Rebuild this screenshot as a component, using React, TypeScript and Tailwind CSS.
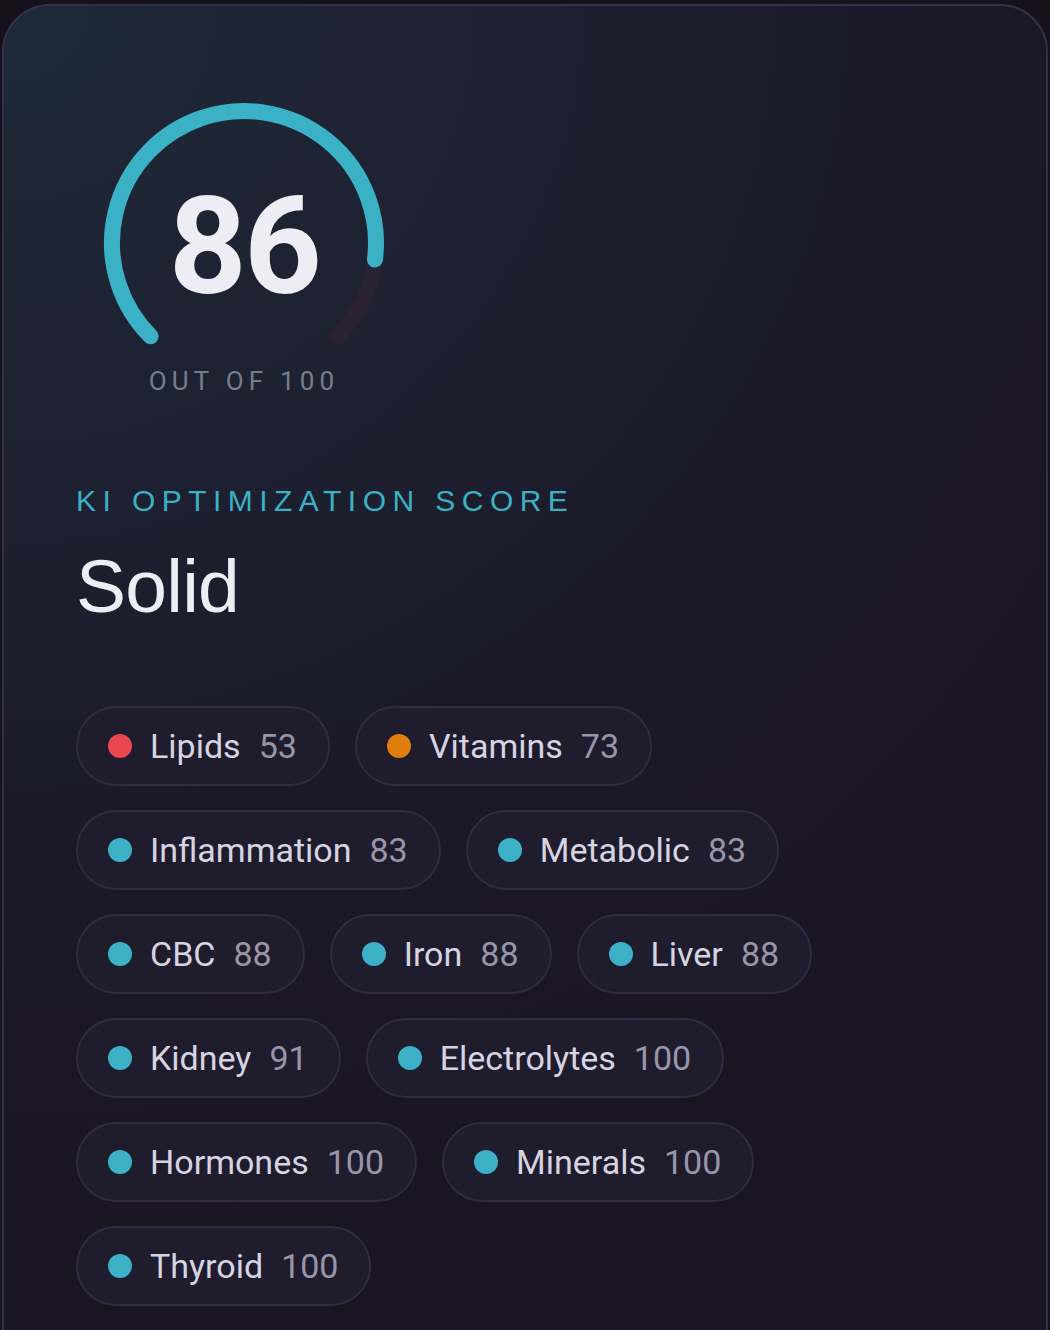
import React from "react";

type Chip = { label: string; value: number; color: string };

const rows: Chip[][] = [
  [
    { label: "Lipids", value: 53, color: "bg-[#e8474f]" },
    { label: "Vitamins", value: 73, color: "bg-[#e07d0c]" },
  ],
  [
    { label: "Inflammation", value: 83, color: "bg-[#3cb1c6]" },
    { label: "Metabolic", value: 83, color: "bg-[#3cb1c6]" },
  ],
  [
    { label: "CBC", value: 88, color: "bg-[#3cb1c6]" },
    { label: "Iron", value: 88, color: "bg-[#3cb1c6]" },
    { label: "Liver", value: 88, color: "bg-[#3cb1c6]" },
  ],
  [
    { label: "Kidney", value: 91, color: "bg-[#3cb1c6]" },
    { label: "Electrolytes", value: 100, color: "bg-[#3cb1c6]" },
  ],
  [
    { label: "Hormones", value: 100, color: "bg-[#3cb1c6]" },
    { label: "Minerals", value: 100, color: "bg-[#3cb1c6]" },
  ],
  [{ label: "Thyroid", value: 100, color: "bg-[#3cb1c6]" }],
];

function polar(cx: number, cy: number, r: number, deg: number) {
  const a = (deg * Math.PI) / 180;
  return [cx + r * Math.cos(a), cy + r * Math.sin(a)];
}

function arc(cx: number, cy: number, r: number, a0: number, a1: number) {
  const [x0, y0] = polar(cx, cy, r, a0);
  const [x1, y1] = polar(cx, cy, r, a1);
  const large = a1 - a0 > 180 ? 1 : 0;
  return `M ${x0} ${y0} A ${r} ${r} 0 ${large} 1 ${x1} ${y1}`;
}

function Gauge({ value }: { value: number }) {
  const start = 135;
  const total = 270;
  const end = start + (total * value) / 100;
  return (
    <div className="relative w-[300px] h-[262px]">
      <svg width="300" height="262" viewBox="0 0 300 262" className="block">
        <path
          d={arc(150, 150, 132, end, start + total)}
          stroke="#2a2135"
          strokeWidth="16"
          fill="none"
          strokeLinecap="round"
        />
        <path
          d={arc(150, 150, 132, start, end)}
          stroke="#3ab1c5"
          strokeWidth="16"
          fill="none"
          strokeLinecap="round"
        />
      </svg>
      <div className="absolute left-0 top-[84px] w-[300px] text-center text-[136px] leading-[140px] font-bold tracking-[-0.02em] text-[#eeedf3] [font-family:Roboto,'Noto_Sans',sans-serif]">
        86
      </div>
    </div>
  );
}

function ChipView({ c }: { c: Chip }) {
  return (
    <div className="h-[80px] flex items-center rounded-full border-2 border-[#2f2b40] bg-[#1f1c2d] pl-[30px] pr-[31px]">
      <span className={`w-[24px] h-[24px] rounded-full ${c.color} shrink-0`} />
      <span className="ml-[18px] text-[34px] text-[#d7d4e1] [font-family:Roboto,sans-serif]">
        {c.label}
      </span>
      <span className="ml-[18px] text-[34px] text-[#9995a8] [font-family:Roboto,sans-serif]">
        {c.value}
      </span>
    </div>
  );
}

export default function App() {
  return (
    <div className="w-[1050px] h-[1330px] overflow-hidden bg-[#15121b]">
      <div className="ml-[2px] mt-[4px] w-[1046px] min-h-[1400px] rounded-t-[48px] border-2 border-[#33304a] bg-[radial-gradient(130%_90%_at_0%_0%,#1f2939_0%,#1d2131_38%,#1b1828_70%,#1a1523_100%)] pl-[72px]">
        <div className="ml-[18px] mt-[87px]">
          <Gauge value={86} />
        </div>
        <div className="mt-[10px] w-[336px] text-center text-[26px] leading-[32px] tracking-[0.2em] text-[#787d8d] [font-family:Roboto,sans-serif]">
          OUT OF 100
        </div>
        <div className="mt-[84px] text-[30px] leading-[40px] tracking-[0.215em] text-[#3ab1c5] [font-family:'Liberation_Sans',Arial,sans-serif]">
          KI OPTIMIZATION SCORE
        </div>
        <div className="mt-[25px] text-[75px] leading-[80px] font-medium tracking-[-0.01em] text-[#eeedf3] [font-family:'Liberation_Sans',Arial,sans-serif]">
          Solid
        </div>
        <div className="mt-[80px] flex flex-col gap-[24px]">
          {rows.map((r, i) => (
            <div key={i} className="flex gap-[25px]">
              {r.map((c) => (
                <ChipView key={c.label} c={c} />
              ))}
            </div>
          ))}
        </div>
      </div>
    </div>
  );
}
